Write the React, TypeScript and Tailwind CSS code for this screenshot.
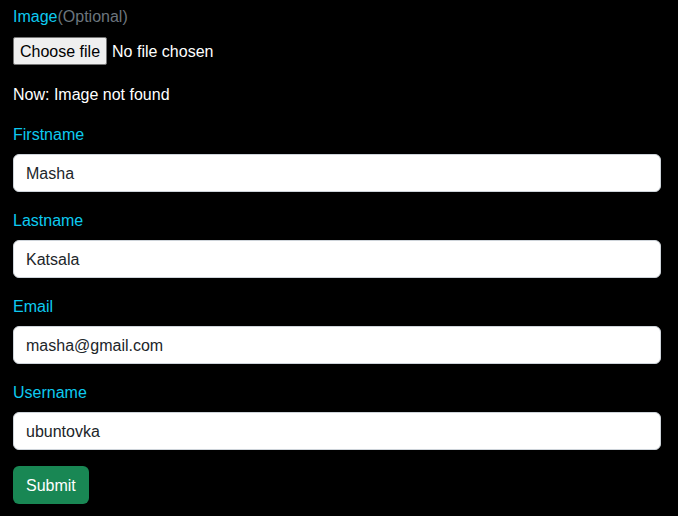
const fields = [
  { label: 'Firstname', value: 'Masha' },
  { label: 'Lastname', value: 'Katsala' },
  { label: 'Email', value: 'masha@gmail.com' },
  { label: 'Username', value: 'ubuntovka' },
]

export default function App() {
  return (
    <div className="min-h-[516px] bg-black pl-[13px] pr-[17px] pt-1 font-['Liberation_Sans',Arial,sans-serif] text-base text-white">
      <form onSubmit={(e) => e.preventDefault()}>
        <div className="mb-4">
          <label className="mb-2 block pt-px leading-[23px] text-[#0dcaf0]">
            Image<span className="text-[#6c757d]">(Optional)</span>
          </label>
          <div className="flex h-[30px] items-center">
            <span className="flex h-[28px] items-center rounded-[2px] border border-[#767676] bg-[#efefef] px-[6px] pt-px text-[16px] text-black">
              Choose file
            </span>
            <span className="ml-[5px] pt-px text-white">No file chosen</span>
          </div>
        </div>
        <p className="mb-4 pt-px leading-[23px]">Now: Image not found</p>
        {fields.map((f) => (
          <div key={f.label} className="mb-4">
            <label className="mb-2 block pt-px leading-[23px] text-[#0dcaf0]">{f.label}</label>
            <input
              defaultValue={f.value}
              className="block h-[38px] w-full rounded-[6px] border border-[#ced4da] bg-white px-3 pt-px text-base text-[#212529] outline-none"
            />
          </div>
        ))}
        <button
          type="submit"
          className="h-[38px] rounded-[6px] bg-[#198754] px-[13px] pt-px leading-6 text-white"
        >
          Submit
        </button>
      </form>
    </div>
  )
}
